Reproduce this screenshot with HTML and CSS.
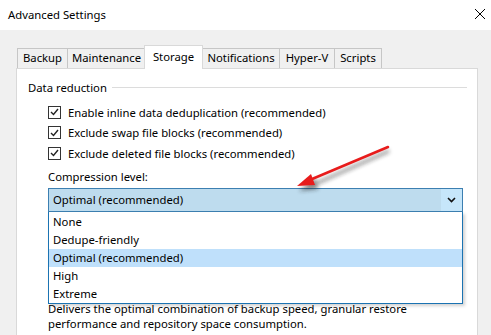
FILE: index.html
```html
<!DOCTYPE html>
<html lang="en">
<head>
    <meta charset="UTF-8">
    <title>Advanced Settings</title>
    <link rel="stylesheet" href="styles.css">
</head>
<body>
    <div class="titlebar">
        <span class="title">Advanced Settings</span>
        <svg class="close" width="12" height="12" viewBox="0 0 12 12">
            <path d="M1 1 L11 11 M11 1 L1 11" stroke="#000" stroke-width="1" fill="none"/>
        </svg>
    </div>

    <div class="window">
        <div class="tabs">
            <div class="tab t-backup">Backup</div>
            <div class="tab t-maint">Maintenance</div>
            <div class="tab t-storage active">Storage</div>
            <div class="tab t-notif">Notifications</div>
            <div class="tab t-hyperv">Hyper-V</div>
            <div class="tab t-scripts">Scripts</div>
        </div>

        <div class="panel">
            <div class="group-head">
                <span>Data reduction</span>
                <div class="group-line"></div>
            </div>

            <div class="group-body">
                <label class="check-row"><span class="box"><svg width="9" height="8" viewBox="0 0 9 8"><path d="M1 4 L3.5 6.5 L8 1" stroke="#222" stroke-width="1.4" fill="none"/></svg></span>Enable inline data deduplication (recommended)</label>
                <label class="check-row"><span class="box"><svg width="9" height="8" viewBox="0 0 9 8"><path d="M1 4 L3.5 6.5 L8 1" stroke="#222" stroke-width="1.4" fill="none"/></svg></span>Exclude swap file blocks (recommended)</label>
                <label class="check-row"><span class="box"><svg width="9" height="8" viewBox="0 0 9 8"><path d="M1 4 L3.5 6.5 L8 1" stroke="#222" stroke-width="1.4" fill="none"/></svg></span>Exclude deleted file blocks (recommended)</label>

                <div class="field-label">Compression level:</div>
                <div class="combo">
                    <span class="combo-text">Optimal (recommended)</span>
                    <span class="combo-btn">
                        <svg width="9" height="6" viewBox="0 0 9 6"><path d="M1 1 L4.5 4.5 L8 1" stroke="#111" stroke-width="1.6" fill="none"/></svg>
                    </span>
                    <ul class="combo-list">
                        <li>None</li>
                        <li>Dedupe-friendly</li>
                        <li class="selected">Optimal (recommended)</li>
                        <li>High</li>
                        <li>Extreme</li>
                    </ul>
                </div>

                <p class="desc">Delivers the optimal combination of backup speed, granular restore performance and repository space consumption.</p>
            </div>
        </div>
    </div>

    <!-- callout arrow drawn over the screenshot -->
    <svg class="callout" width="491" height="335" viewBox="0 0 491 335">
        <defs>
            <filter id="blur" x="-20%" y="-20%" width="140%" height="140%">
                <feGaussianBlur stdDeviation="2.2"/>
            </filter>
        </defs>
        <g filter="url(#blur)" opacity="0.55">
            <path d="M389 151 L306 188" stroke="#222" stroke-width="3" fill="none"/>
            <path d="M299 191 L315 178 L318 189 Z" fill="#222"/>
        </g>
        <path d="M388 147 L305 182" stroke="#e81c1c" stroke-width="2.5" stroke-linecap="round" fill="none"/>
        <path d="M297 186 L311 174 L315 185 Z" fill="#e81c1c"/>
    </svg>
</body>
</html>
```

FILE: styles.css
```css
body {
    margin: 0;
    width: 491px;
    height: 335px;
    overflow: hidden;
    font-family: "Noto Sans", "Open Sans", sans-serif;
    font-size: 11.3px;
    color: #000;
    background-color: #f0f0f0;
    position: relative;
}

.titlebar {
    height: 30px;
    background-color: #fff;
    display: flex;
    align-items: center;
    justify-content: space-between;
    padding: 0 5px 0 8px;
}
.title {
    margin-top: -1px;
}
.close {
    margin-top: -2px;
}

.window {
    padding: 15px 13px 0 16px;
}

.tabs {
    display: flex;
    align-items: flex-end;
    height: 23px;
    padding-left: 1px;
}
.tab {
    height: 20px;
    line-height: 18px;
    box-sizing: border-box;
    text-align: center;
    background-color: #f0f0f0;
    border: 1px solid #c6c6c6;
    border-bottom: none;
    margin-right: -1px;
}
.tab.active {
    height: 24px;
    line-height: 21px;
    background-color: #fff;
    border-color: #d9d9d9;
    position: relative;
    z-index: 1;
    margin: 0 -1px -1px -1px;
}
.t-backup { width: 51px; }
.t-maint { width: 79px; }
.t-storage { width: 59px; }
.t-notif { width: 78px; }
.t-hyperv { width: 56px; }
.t-scripts { width: 48px; }

.panel {
    background-color: #fff;
    border: 1px solid #d9d9d9;
    border-bottom: none;
    height: 255px;
    padding: 11px 10px 0 11px;
}

.group-head {
    display: flex;
    align-items: center;
    height: 16px;
    line-height: 16px;
}
.group-line {
    flex: 1;
    height: 1px;
    background-color: #dcdcdc;
    margin-left: 5px;
    margin-top: -1px;
}

.group-body {
    padding-left: 20px;
    padding-top: 6px;
}

.check-row {
    display: flex;
    align-items: center;
    height: 20.5px;
}
.box {
    width: 13px;
    height: 13px;
    box-sizing: border-box;
    border: 1px solid #333;
    display: flex;
    align-items: center;
    justify-content: center;
    margin-right: 7px;
}

.field-label {
    margin-top: 5px;
    height: 16px;
    line-height: 16px;
}

.combo {
    position: relative;
    margin-top: 3px;
    width: 415px;
    height: 24px;
    box-sizing: border-box;
    border: 1px solid #3c7fb1;
    background-color: #bedcee;
    display: flex;
    align-items: center;
}
.combo-text {
    flex: 1;
    padding-left: 4px;
}
.combo-btn {
    width: 21px;
    height: 22px;
    background-color: #c6e6fa;
    display: flex;
    align-items: center;
    justify-content: center;
}

.combo-list {
    position: absolute;
    left: -1px;
    top: 23px;
    width: 415px;
    box-sizing: border-box;
    margin: 0;
    padding: 1px 0 0 0;
    list-style: none;
    background-color: #fff;
    border: 1px solid #1b73b2;
    border-top: none;
    box-shadow: 2px 2px 3px rgba(0, 0, 0, 0.18);
    z-index: 2;
}
.combo-list li {
    height: 18px;
    line-height: 18px;
    padding-left: 4px;
}
.combo-list li.selected {
    background-color: #bfe0fb;
}

.desc {
    margin: 89px 0 0 0;
    line-height: 15px;
    width: 400px;
}

.callout {
    position: absolute;
    left: 0;
    top: 0;
    pointer-events: none;
    z-index: 5;
}
```
